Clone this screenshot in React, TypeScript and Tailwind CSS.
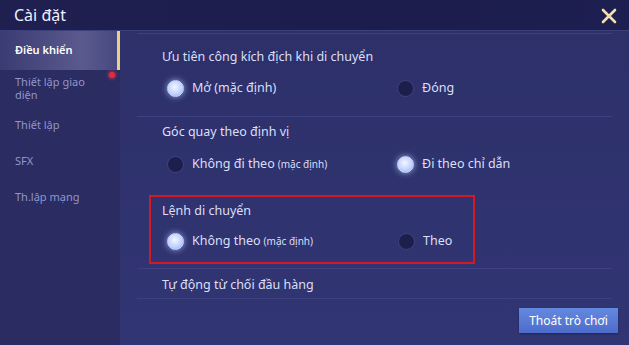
import React from 'react';

const MENU = [
  { label: 'Điều khiển', active: true },
  { label: 'Thiết lập giao diện', dot: true },
  { label: 'Thiết lập' },
  { label: 'SFX' },
  { label: 'Th.lập mạng' },
];

function Radio({ on }: { on?: boolean }) {
  return on ? (
    <span className="block h-[17px] w-[17px] rounded-full border border-[#c9d8ff] bg-[radial-gradient(circle_at_45%_40%,#f4f7ff_0%,#c3d2ff_55%,#8ea6ea_100%)] shadow-[0_0_6px_rgba(180,200,255,0.8)]" />
  ) : (
    <span className="block h-[17px] w-[17px] rounded-full border border-[#3f4480] bg-[#1c1e4b]" />
  );
}

function Option({ on, label, note }: { on?: boolean; label: string; note?: string }) {
  return (
    <div className="flex items-center gap-[8px]">
      <Radio on={on} />
      <span className="text-[12.5px] text-[#dcdff8]">
        {label}
        {note && <span className="ml-[3px] text-[10px]">{note}</span>}
      </span>
    </div>
  );
}

function Row({ children }: { children: React.ReactNode }) {
  return <div className="grid grid-cols-[230px_1fr] items-center pl-[47px]">{children}</div>;
}

export default function App() {
  return (
    <div
      className="flex h-[345px] w-[629px] flex-col overflow-hidden bg-[#2e3270]"
      style={{ fontFamily: '"Noto Sans", "Open Sans", sans-serif' }}
    >
      {/* header */}
      <div className="flex h-[31px] shrink-0 items-center justify-between border-b border-[#3b3f7e] bg-[linear-gradient(90deg,#1f2050,#1c1d4c_60%,#1d1f50)] pl-[14px] pr-[12px]">
        <span className="text-[16px] text-[#eef0ff]">Cài đặt</span>
        <svg width="16" height="16" viewBox="0 0 16 16" className="mt-[1px]">
          <path d="M2 2 L14 14 M14 2 L2 14" stroke="#f2dfb0" strokeWidth="2.6" strokeLinecap="round" />
        </svg>
      </div>

      <div className="flex flex-1">
        {/* sidebar */}
        <div className="flex w-[120px] shrink-0 flex-col bg-[#2a2c62]">
          {MENU.map((m) =>
            m.active ? (
              <div
                key={m.label}
                className="flex h-[39px] items-center border-r-[3px] border-[#e8cf8c] bg-[linear-gradient(90deg,#3a3b72,#5a5a8e_70%,#48497f)] pl-[15px] text-[11px] font-semibold text-white"
              >
                {m.label}
              </div>
            ) : (
              <div
                key={m.label}
                className="relative flex min-h-[36px] items-center py-[2px] pl-[15px] pr-[20px] text-[11px] leading-[13px] text-[#9396cc]"
              >
                {m.label}
                {m.dot && (
                  <span className="absolute right-[5px] top-[2px] h-[6px] w-[6px] rounded-full bg-[#e8283a] shadow-[0_0_4px_#ff4050]" />
                )}
              </div>
            ),
          )}
        </div>

        {/* content */}
        <div className="flex flex-1 flex-col bg-[linear-gradient(180deg,#2d3069,#313573)]">
          <div className="mx-[17px] mt-[2px] h-px bg-[#3c4080]" />
          <div className="flex h-[82px] flex-col">
            <div className="mt-[14px] pl-[42px] text-[12.5px] text-[#dcdff8]">Ưu tiên công kích địch khi di chuyển</div>
            <div className="mt-[12px]">
              <Row>
                <Option on label="Mở (mặc định)" />
                <Option label="Đóng" />
              </Row>
            </div>
          </div>
          <div className="mx-[17px] h-px bg-[#3c4080]" />
          <div className="flex h-[78px] flex-col">
            <div className="mt-[6px] pl-[42px] text-[12.5px] text-[#dcdff8]">Góc quay theo định vị</div>
            <div className="mt-[13px]">
              <Row>
                <Option label="Không đi theo" note="(mặc định)" />
                <Option on label="Đi theo chỉ dẫn" />
              </Row>
            </div>
          </div>
          <div className="ml-[29px] flex h-[69px] w-[326px] flex-col border-2 border-[#d11a25]">
            <div className="mt-[5px] pl-[11px] text-[12.5px] text-[#dcdff8]">Lệnh di chuyển</div>
            <div className="mt-[11px] grid grid-cols-[231px_1fr] items-center pl-[16px]">
              <Option on label="Không theo" note="(mặc định)" />
              <Option label="Theo" />
            </div>
          </div>
          <div className="mx-[17px] mt-[4px] h-px bg-[#3c4080]" />
          <div className="h-[29px] pl-[42px] pt-[8px] text-[12.5px] leading-[16px] text-[#dcdff8]">Tự động từ chối đầu hàng</div>
          <div className="mx-[17px] h-px bg-[#3c4080]" />
          <div className="flex justify-end pr-[11px] pt-[9px]">
            <button className="h-[25px] w-[99px] bg-[linear-gradient(180deg,#6489e0,#4d6ccb)] text-[12px] text-white shadow-[0_1px_2px_rgba(0,0,0,0.3)]">
              Thoát trò chơi
            </button>
          </div>
        </div>
      </div>
    </div>
  );
}
